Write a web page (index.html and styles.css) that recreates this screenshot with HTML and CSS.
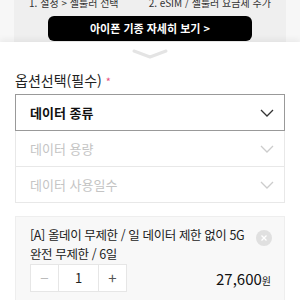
FILE: index.html
```html
<!DOCTYPE html>
<html lang="ko">
<head>
   <meta charset="UTF-8">
   <meta name="viewport" content="width=device-width, initial-scale=1.0">
   <title>옵션선택</title>
   <link rel="stylesheet" href="styles.css">
</head>
<body>
    <div class="top">
        <div class="panel">
            <div class="steps">
                <span>1. 설정 &gt; 셀룰러 선택</span>
                <span>2. eSIM / 셀룰러 요금제 추가</span>
            </div>
            <div class="guide_btn">아이폰 기종 자세히 보기 &gt;</div>
        </div>
    </div>
    <div class="sheet">
        <div class="handle">
            <svg width="36" height="12" viewBox="0 0 36 12"><path d="M2 3 L18 9 L34 3" fill="none" stroke="#e4e4e4" stroke-width="3" stroke-linecap="round" stroke-linejoin="round"/></svg>
        </div>
        <div class="label">옵션선택(필수) <span class="req">*</span></div>
        <div class="select_list">
            <div class="select active">
                <span>데이터 종류</span>
                <svg width="14" height="8" viewBox="0 0 14 8"><path d="M1 1 L7 7 L13 1" fill="none" stroke="#333" stroke-width="1.3"/></svg>
            </div>
            <div class="select">
                <span>데이터 용량</span>
                <svg width="14" height="8" viewBox="0 0 14 8"><path d="M1 1 L7 7 L13 1" fill="none" stroke="#ccc" stroke-width="1.3"/></svg>
            </div>
            <div class="select">
                <span>데이터 사용일수</span>
                <svg width="14" height="8" viewBox="0 0 14 8"><path d="M1 1 L7 7 L13 1" fill="none" stroke="#ccc" stroke-width="1.3"/></svg>
            </div>
        </div>
        <div class="card">
            <div class="card_head">
                <div class="card_title">[A] 올데이 무제한 / 일 데이터 제한 없이 5G 완전 무제한 / 6일</div>
                <div class="close">
                    <svg width="16" height="16" viewBox="0 0 16 16"><circle cx="8" cy="8" r="8" fill="#e0e0e0"/><path d="M5.5 5.5 L10.5 10.5 M10.5 5.5 L5.5 10.5" stroke="#fff" stroke-width="1.3"/></svg>
                </div>
            </div>
            <div class="card_row">
                <div class="qty">
                    <div class="qty_btn minus">−</div>
                    <div class="qty_val">1</div>
                    <div class="qty_btn">+</div>
                </div>
                <div class="price">27,600<small>원</small></div>
            </div>
        </div>
    </div>
</body>
</html>
```

FILE: styles.css
```css
body {
    margin: 0;
    width: 300px;
    height: 300px;
    overflow: hidden;
    font-family: "Noto Sans CJK KR", "Noto Sans", sans-serif;
    color: #222;
    background: #fff;
}
.top {
    height: 42px;
    background: #f7f7f7;
}
.panel {
    height: 42px;
    margin: 0 14px;
    background: #efefef;
    display: flex;
    flex-direction: column;
    align-items: center;
}
.steps {
    width: 100%;
    margin-top: -5px;
    height: 16px;
    display: flex;
    justify-content: space-around;
    font-size: 10px;
    line-height: 16px;
    color: #333;
}
.guide_btn {
    margin-top: 5px;
    width: 204px;
    height: 25px;
    border-radius: 6px;
    background: #000;
    color: #fff;
    font-size: 11px;
    font-weight: bold;
    line-height: 25px;
    text-align: center;
}
.sheet {
    background: #fff;
    padding: 0 15px;
    box-shadow: 0 -3px 6px rgba(0, 0, 0, 0.05);
    position: relative;
}
.handle {
    height: 24px;
    display: flex;
    justify-content: center;
    align-items: center;
}
.label {
    margin-top: 4px;
    font-size: 14px;
    line-height: 20px;
    color: #222;
}
.req {
    color: #e8527f;
    font-size: 11px;
}
.select_list {
    margin-top: 3px;
    display: flex;
    flex-direction: column;
}
.select {
    height: 35px;
    border: 1px solid #e8e8e8;
    border-top: none;
    display: flex;
    justify-content: space-between;
    align-items: center;
    padding: 0 10px 0 14px;
    font-size: 13px;
    color: #c4c4c4;
}
.select.active {
    border: 1px solid #999;
    color: #111;
    font-weight: bold;
}
.card {
    margin-top: 13px;
    background: #f8f8f8;
    border: 1px solid #eee;
    padding: 8px 12px 12px 14px;
}
.card_head {
    display: flex;
    align-items: flex-start;
    gap: 4px;
}
.card_title {
    flex: 1;
    font-size: 12.5px;
    line-height: 19px;
    letter-spacing: -0.4px;
    color: #222;
}
.close {
    margin-top: 2px;
    height: 16px;
}
.card_row {
    margin-top: 1px;
    display: flex;
    justify-content: space-between;
    align-items: center;
}
.qty {
    display: flex;
    height: 26px;
    border: 1px solid #e6e6e6;
    background: #fff;
}
.qty_btn {
    width: 27px;
    text-align: center;
    line-height: 26px;
    font-size: 15px;
    color: #555;
}
.qty_btn.minus {
    color: #bbb;
}
.qty_val {
    width: 39px;
    border-left: 1px solid #e6e6e6;
    border-right: 1px solid #e6e6e6;
    text-align: center;
    line-height: 26px;
    font-size: 13px;
}
.price {
    font-size: 15px;
    color: #111;
    padding-right: 1px;
}
.price small {
    font-size: 10px;
}
```
